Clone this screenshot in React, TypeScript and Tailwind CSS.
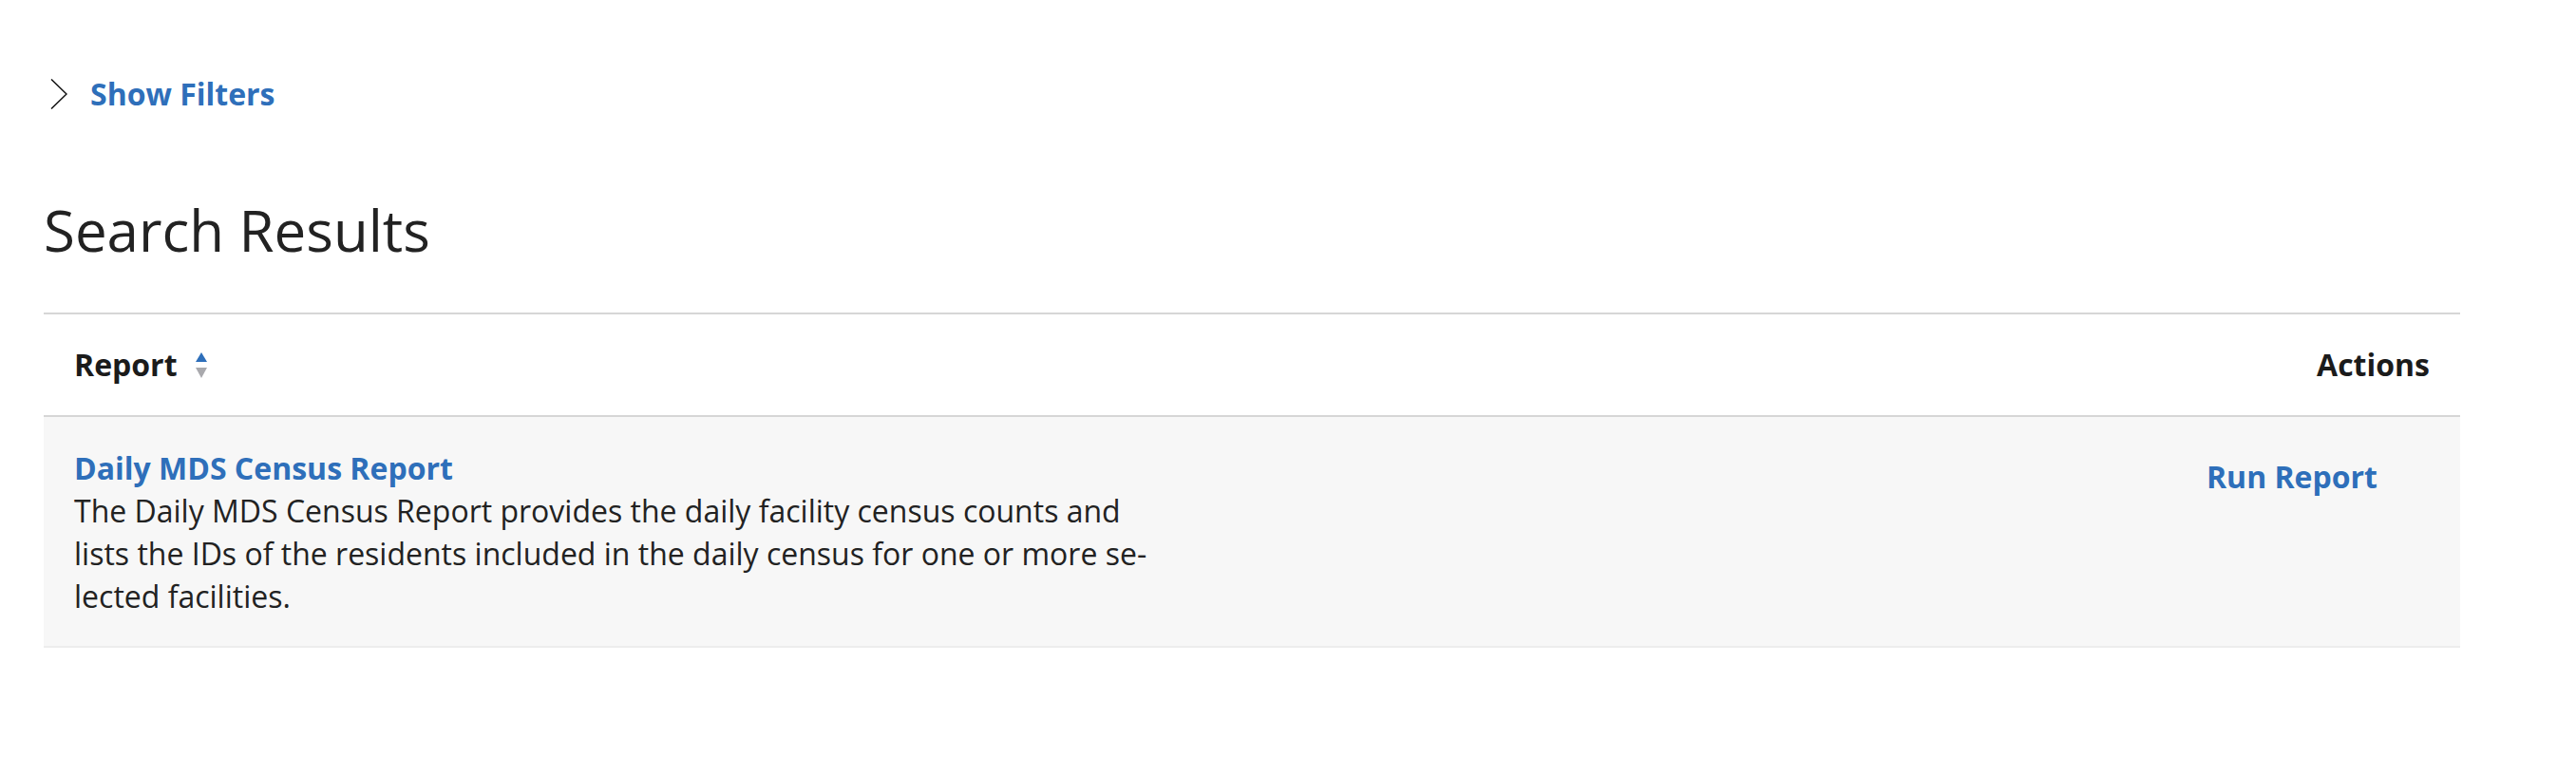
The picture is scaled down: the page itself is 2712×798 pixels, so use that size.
import React from 'react';

function ChevronRight() {
  return (
    <svg width="18" height="32" viewBox="0 0 18 32" fill="none" className="shrink-0">
      <polyline points="1,0.5 17,16 1,31.5" stroke="#111" strokeWidth="1.5" />
    </svg>
  );
}

function SortIcon() {
  return (
    <svg width="12" height="27" viewBox="0 0 12 27" className="shrink-0">
      <polygon points="6,0 12,10 0,10" fill="#2e6fba" />
      <polygon points="0,16 12,16 6,27" fill="#a9a9ad" />
    </svg>
  );
}

export default function App() {
  return (
    <div className="min-h-screen bg-white font-['Open_Sans',sans-serif] text-[#222]">
      <div className="pl-[46px] pr-[122px] pt-[77px]">
        {/* Filters toggle */}
        <button className="flex items-center gap-[24px] pl-[7px] text-[32px] leading-[44px] font-bold text-[#2e6fba]">
          <ChevronRight />
          <span>Show Filters</span>
        </button>

        {/* Heading */}
        <h1 className="mt-[85px] text-[60px] leading-[72px] font-normal text-[#222]">Search Results</h1>

        {/* Results table */}
        <div className="mt-[51px] border-t-2 border-[#d6d6d6]">
          <div className="flex items-center justify-between px-8 pt-[31px] pb-[31px] text-[32px] leading-[44px] font-bold text-[#1b1b1b] border-b-2 border-[#d6d6d6]">
            <div className="flex items-center gap-[19px]">
              <span>Report</span>
              <SortIcon />
            </div>
            <span>Actions</span>
          </div>

          <div className="flex justify-between bg-[#f7f7f7] border-b-2 border-[#ededed]">
            <div className="pl-8 pt-[31px] pb-[30px] text-[32px] leading-[45px]">
              <a href="#" className="block font-bold text-[#2e6fba]">Daily MDS Census Report</a>
              <p className="w-[1150px] text-[#222]">
                The Daily MDS Census Report provides the daily facility census counts and lists the IDs of the residents included in the daily census for one or more se{'\u00AD'}lected facilities.
              </p>
            </div>
            <div className="pt-[41px] pr-[87px]">
              <button className="text-[32px] leading-[44px] font-bold text-[#2e6fba]">Run Report</button>
            </div>
          </div>
        </div>
      </div>
    </div>
  );
}
